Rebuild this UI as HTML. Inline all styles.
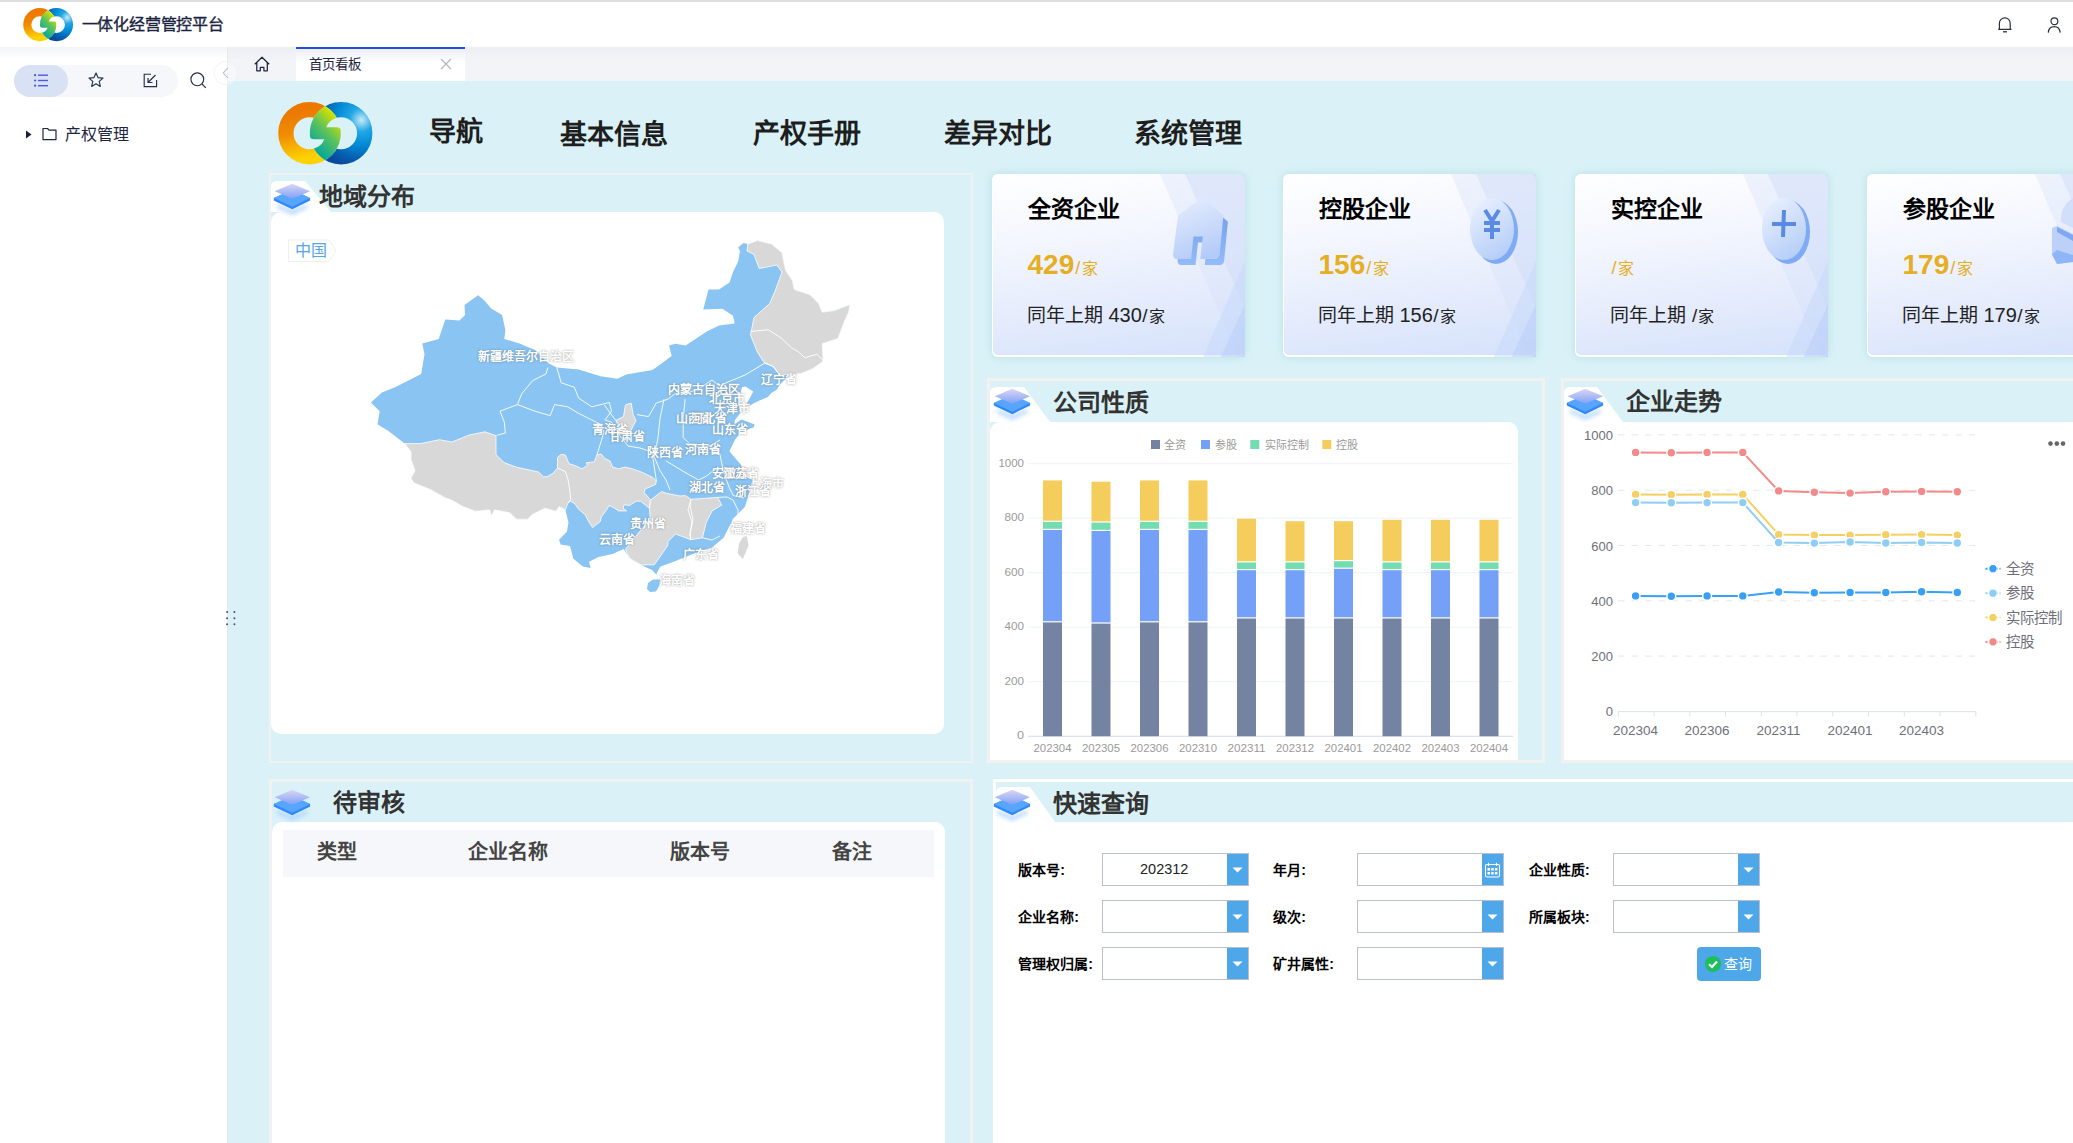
<!DOCTYPE html><html lang="zh-CN"><head><meta charset="utf-8"><title>一体化经营管控平台</title>
<style>
html,body{margin:0;padding:0;}
body{width:2073px;height:1143px;overflow:hidden;position:relative;background:#fff;font-family:"Liberation Sans",sans-serif;}
.t{position:absolute;white-space:nowrap;}
.b{position:absolute;box-sizing:border-box;}
svg{position:absolute;overflow:visible;}
</style></head><body>

<div class="b" style="left:0px;top:0px;width:2073px;height:2px;background:#dcdedf"></div>
<div class="b" style="left:0px;top:2px;width:2073px;height:45px;background:#fff"></div>
<div class="b" style="left:0px;top:47px;width:227px;height:1096px;background:#fff"></div>
<div class="b" style="left:0px;top:47px;width:227px;height:12px;background:linear-gradient(#f3f4f7,#fff)"></div>
<div class="b" style="left:227px;top:47px;width:1px;height:1096px;background:#e6e8ec"></div>
<div class="b" style="left:228px;top:47px;width:1845px;height:34px;background:linear-gradient(#eceef3,#f3f4f8 40%,#f3f4f8)"></div>
<div class="b" style="left:228px;top:81px;width:1845px;height:1062px;background:#daf2f7"></div>
<svg style="left:20.8px;top:5.9px" width="55.0" height="38.1" viewBox="0 0 104 72">
<defs>
<linearGradient id="oa" x1="0.3" y1="0" x2="0.5" y2="1"><stop offset="0" stop-color="#ec7800"/><stop offset="0.45" stop-color="#f08c00"/><stop offset="1" stop-color="#fdd200"/></linearGradient>
<radialGradient id="bla" cx="0.93" cy="0.22" r="1.0"><stop offset="0" stop-color="#c8eaf8"/><stop offset="0.25" stop-color="#22a6e4"/><stop offset="0.55" stop-color="#0088d4"/><stop offset="0.8" stop-color="#0562b4"/><stop offset="1" stop-color="#0a4a9e"/></radialGradient>
<linearGradient id="ga" x1="0.75" y1="0.15" x2="0.3" y2="0.9"><stop offset="0" stop-color="#d2e000"/><stop offset="0.45" stop-color="#5cc25c"/><stop offset="1" stop-color="#00a89e"/></linearGradient>
</defs>
<mask id="mLa" maskUnits="userSpaceOnUse" x="0" y="0" width="104" height="72"><rect width="104" height="72" fill="#fff"/><circle cx="67.1" cy="35.2" r="31.3" fill="#000"/></mask>
<mask id="mRa" maskUnits="userSpaceOnUse" x="0" y="0" width="104" height="72"><rect width="104" height="72" fill="#fff"/><circle cx="35.5" cy="35.2" r="31.3" fill="#000"/></mask>
<circle cx="35.5" cy="35.2" r="23.65" fill="none" stroke="url(#oa)" stroke-width="15.3" mask="url(#mLa)"/>
<circle cx="67.1" cy="35.2" r="23.65" fill="none" stroke="url(#bla)" stroke-width="15.3" mask="url(#mRa)"/>
<path d="M51.3 8.18 A31.3 31.3 0 0 0 35.93 38 Q36.2 41.2 40 41.2 L50.33 41.2 A16 16 0 0 1 39.85 50.6 A31.3 31.3 0 0 0 51.3 62.22 A31.3 31.3 0 0 0 66.67 32.4 Q66.4 29.2 62.6 29.2 L52.27 29.2 A16 16 0 0 1 62.75 19.8 A31.3 31.3 0 0 0 51.3 8.18 Z" fill="url(#ga)"/>
</svg>
<div class="t " style="left:81.5px;top:16.7px;font-size:16px;line-height:16px;color:#1b2542;-webkit-text-stroke:0.35px #1b2542;letter-spacing:-0.2px">一体化经营管控平台</div>
<svg style="left:1993px;top:14px" width="24" height="22" viewBox="0 0 24 22">
<path d="M6.4 15.4 V9.2 a5.4 5.4 0 0 1 10.8 0 V15.4 M5.2 15.4 H18.5" fill="none" stroke="#2b2f3a" stroke-width="1.2" stroke-linejoin="round"/>
<path d="M10 17.8 H14" stroke="#2b2f3a" stroke-width="1.3"/>
</svg>
<svg style="left:2043px;top:14px" width="22" height="22" viewBox="0 0 22 22">
<circle cx="11.4" cy="7.2" r="3.4" fill="none" stroke="#2b2f3a" stroke-width="1.2"/>
<path d="M5.3 18.6 C5.6 15 8 12.7 11.2 12.7 C14.4 12.7 16.8 15 17.1 18.6" fill="none" stroke="#2b2f3a" stroke-width="1.2"/>
</svg>
<div class="b" style="left:14px;top:65px;width:164px;height:32px;background:#f5f7fa;border-radius:16px"></div>
<div class="b" style="left:14px;top:65px;width:54px;height:32px;background:#d9e1f5;border-radius:16px"></div>
<svg style="left:33px;top:72px" width="17" height="17" viewBox="0 0 17 17">
<g fill="#4a5be0"><rect x="1" y="2" width="2.2" height="2.2" rx="1"/><rect x="1" y="7.4" width="2.2" height="2.2" rx="1"/><rect x="1" y="12.6" width="2.2" height="2.2" rx="1"/>
<rect x="5" y="2.5" width="10" height="1.4"/><rect x="5" y="7.8" width="10" height="1.4"/><rect x="5" y="13" width="10" height="1.4"/></g></svg>
<svg style="left:87px;top:71px" width="18" height="18" viewBox="0 0 18 18">
<path d="M9 2 L11 6.6 L16 7.1 L12.2 10.4 L13.3 15.4 L9 12.8 L4.7 15.4 L5.8 10.4 L2 7.1 L7 6.6 Z" fill="none" stroke="#27304a" stroke-width="1.15" stroke-linejoin="round"/></svg>
<svg style="left:142px;top:72px" width="17" height="17" viewBox="0 0 17 17">
<path d="M9 2.2 H2.2 V14.6 H14.6 V8" fill="none" stroke="#27304a" stroke-width="1.15"/>
<path d="M13.5 3 L6 10.5 M6 6 V10.5 H10.5" fill="none" stroke="#27304a" stroke-width="1.15"/></svg>
<svg style="left:189px;top:71px" width="19" height="19" viewBox="0 0 19 19">
<circle cx="8.3" cy="8.3" r="6.4" fill="none" stroke="#27304a" stroke-width="1.15"/>
<path d="M13 13 L16.8 16.8" stroke="#27304a" stroke-width="1.15"/></svg>
<svg style="left:25px;top:130px" width="8" height="9" viewBox="0 0 8 9"><path d="M1 0.5 L6.5 4.5 L1 8.5 Z" fill="#16213f"/></svg>
<svg style="left:42px;top:127px" width="16" height="14" viewBox="0 0 16 14">
<path d="M1 1.5 H5.5 L7 3.2 H14 V12.6 H1 Z" fill="none" stroke="#1d2541" stroke-width="1.2" stroke-linejoin="round"/></svg>
<div class="t " style="left:64.9px;top:126.8px;font-size:16px;line-height:16px;color:#1d2541">产权管理</div>
<svg style="left:220px;top:605px" width="20" height="25" viewBox="220 605 20 25"><g fill="#44506e">
<circle cx="227.1" cy="611.9" r="1"/><circle cx="234.4" cy="611.9" r="1"/><circle cx="227.1" cy="618.2" r="1"/><circle cx="234.4" cy="618.2" r="1"/><circle cx="227.1" cy="624.3" r="1"/><circle cx="234.4" cy="624.3" r="1"/></g></svg>
<svg style="left:253px;top:56px" width="18" height="17" viewBox="0 0 18 17">
<path d="M1.8 8.2 L9 1.2 L16.2 8.2 M3.8 6.6 V14.8 H7.3 V11.3 H10.9 V14.8 H14.3 V6.6" fill="none" stroke="#1d2541" stroke-width="1.25" stroke-linejoin="round"/></svg>
<div class="b" style="left:296px;top:47px;width:169px;height:34px;background:linear-gradient(#e9ecf4,#fff 45%)"></div>
<div class="b" style="left:296px;top:47px;width:169px;height:2px;background:#1f50d6"></div>
<div class="t " style="left:309.3px;top:57.7px;font-size:13.5px;line-height:13.5px;color:#1d2541">首页看板</div>
<svg style="left:213px;top:61px" width="26" height="26" viewBox="0 0 26 26">
<circle cx="12.6" cy="12" r="11.5" fill="rgba(255,255,255,0.35)" stroke="#eef0f2" stroke-width="0.8"/>
<path d="M14.8 6.8 L10.3 12 L14.8 17" fill="none" stroke="#b9bdc7" stroke-width="1.1"/></svg>
<svg style="left:440px;top:58px" width="12" height="12" viewBox="0 0 12 12"><path d="M1 1 L11 11 M11 1 L1 11" stroke="#b2b6c0" stroke-width="1.1"/></svg>
<svg style="left:274.0px;top:98.0px" width="104.0" height="72.0" viewBox="0 0 104 72">
<defs>
<linearGradient id="ob" x1="0.3" y1="0" x2="0.5" y2="1"><stop offset="0" stop-color="#ec7800"/><stop offset="0.45" stop-color="#f08c00"/><stop offset="1" stop-color="#fdd200"/></linearGradient>
<radialGradient id="blb" cx="0.93" cy="0.22" r="1.0"><stop offset="0" stop-color="#c8eaf8"/><stop offset="0.25" stop-color="#22a6e4"/><stop offset="0.55" stop-color="#0088d4"/><stop offset="0.8" stop-color="#0562b4"/><stop offset="1" stop-color="#0a4a9e"/></radialGradient>
<linearGradient id="gb" x1="0.75" y1="0.15" x2="0.3" y2="0.9"><stop offset="0" stop-color="#d2e000"/><stop offset="0.45" stop-color="#5cc25c"/><stop offset="1" stop-color="#00a89e"/></linearGradient>
</defs>
<mask id="mLb" maskUnits="userSpaceOnUse" x="0" y="0" width="104" height="72"><rect width="104" height="72" fill="#fff"/><circle cx="67.1" cy="35.2" r="31.3" fill="#000"/></mask>
<mask id="mRb" maskUnits="userSpaceOnUse" x="0" y="0" width="104" height="72"><rect width="104" height="72" fill="#fff"/><circle cx="35.5" cy="35.2" r="31.3" fill="#000"/></mask>
<circle cx="35.5" cy="35.2" r="23.65" fill="none" stroke="url(#ob)" stroke-width="15.3" mask="url(#mLb)"/>
<circle cx="67.1" cy="35.2" r="23.65" fill="none" stroke="url(#blb)" stroke-width="15.3" mask="url(#mRb)"/>
<path d="M51.3 8.18 A31.3 31.3 0 0 0 35.93 38 Q36.2 41.2 40 41.2 L50.33 41.2 A16 16 0 0 1 39.85 50.6 A31.3 31.3 0 0 0 51.3 62.22 A31.3 31.3 0 0 0 66.67 32.4 Q66.4 29.2 62.6 29.2 L52.27 29.2 A16 16 0 0 1 62.75 19.8 A31.3 31.3 0 0 0 51.3 8.18 Z" fill="url(#gb)"/>
</svg>
<div class="t " style="left:428.6px;top:118.9px;font-size:27px;line-height:27px;color:#1e1e1e;font-weight:bold">导航</div>
<div class="t " style="left:560.0px;top:121.5px;font-size:27px;line-height:27px;color:#1e1e1e;font-weight:bold">基本信息</div>
<div class="t " style="left:752.9px;top:121.2px;font-size:27px;line-height:27px;color:#1e1e1e;font-weight:bold">产权手册</div>
<div class="t " style="left:943.6px;top:121.2px;font-size:27px;line-height:27px;color:#1e1e1e;font-weight:bold">差异对比</div>
<div class="t " style="left:1134.2px;top:121.2px;font-size:27px;line-height:27px;color:#1e1e1e;font-weight:bold">系统管理</div>
<div class="b" style="left:269px;top:173px;width:704px;height:590px;border:2px solid #f1f1f0;background:#daf2f7"></div>
<svg style="left:271px;top:181px" width="60" height="31" viewBox="0 0 60 31"><path d="M0 31 V6 Q0 0 6 0 H34 L60 31 Z" style="fill:#fff"/></svg>
<div class="b" style="left:271px;top:212px;width:673px;height:522px;background:#fff;border-radius:10px"></div>
<svg style="left:273px;top:183px" width="40" height="36" viewBox="0 0 40 36">
<defs>
<linearGradient id="ltm" x1="0.5" y1="0" x2="0.5" y2="1"><stop offset="0" stop-color="#ddd6f5"/><stop offset="1" stop-color="#7ea2f5"/></linearGradient>
<filter id="bfm" x="-30%" y="-50%" width="160%" height="200%"><feGaussianBlur stdDeviation="2"/></filter>
</defs>
<path d="M4 21 L19.3 27 L34.6 21 L34.6 25 L19.3 32 L4 25 Z" fill="#a8d0ff" opacity="0.8" filter="url(#bfm)"/>
<path d="M0.8 15 L19.3 8 L37.1 15 L37.1 17.4 L19.3 26.2 L0.8 17.4 Z" fill="#2f88ff"/>
<path d="M0.8 15 L19.3 6.2 L37.1 15 L19.3 23.8 Z" fill="#57a5ff"/>
<path d="M1.7 8.2 L19.3 0.7 L37.1 8.2 L19.3 15.7 Z" fill="url(#ltm)"/>
</svg>
<div class="t " style="left:318.8px;top:184.8px;font-size:24px;line-height:24px;color:#333;font-weight:bold">地域分布</div>
<svg style="left:287px;top:239px" width="52" height="24" viewBox="0 0 52 24"><path d="M1.5 1 H42 L49 11.5 L42 22.5 H1.5 Z" fill="#fff" stroke="#eef0f2" stroke-width="1"/></svg>
<div class="t " style="left:295.2px;top:242.8px;font-size:16px;line-height:16px;color:#55a6e6">中国</div>
<div class="b" style="left:987px;top:378px;width:558px;height:385px;border:3px solid #f1f1f0;background:#daf2f7"></div>
<svg style="left:990px;top:387px" width="60" height="35" viewBox="0 0 60 35"><path d="M0 35 V6 Q0 0 6 0 H34 L60 35 Z" style="fill:#fff"/></svg>
<div class="b" style="left:990px;top:422px;width:528px;height:338px;background:#fff;border-radius:10px 10px 0 0"></div>
<svg style="left:993px;top:388px" width="40" height="36" viewBox="0 0 40 36">
<defs>
<linearGradient id="ltc" x1="0.5" y1="0" x2="0.5" y2="1"><stop offset="0" stop-color="#ddd6f5"/><stop offset="1" stop-color="#7ea2f5"/></linearGradient>
<filter id="bfc" x="-30%" y="-50%" width="160%" height="200%"><feGaussianBlur stdDeviation="2"/></filter>
</defs>
<path d="M4 21 L19.3 27 L34.6 21 L34.6 25 L19.3 32 L4 25 Z" fill="#a8d0ff" opacity="0.8" filter="url(#bfc)"/>
<path d="M0.8 15 L19.3 8 L37.1 15 L37.1 17.4 L19.3 26.2 L0.8 17.4 Z" fill="#2f88ff"/>
<path d="M0.8 15 L19.3 6.2 L37.1 15 L19.3 23.8 Z" fill="#57a5ff"/>
<path d="M1.7 8.2 L19.3 0.7 L37.1 8.2 L19.3 15.7 Z" fill="url(#ltc)"/>
</svg>
<div class="t " style="left:1053.2px;top:390.6px;font-size:24px;line-height:24px;color:#333;font-weight:bold">公司性质</div>
<div class="b" style="left:1561px;top:378px;width:540px;height:385px;border:3px solid #f1f1f0;background:#daf2f7"></div>
<svg style="left:1564px;top:387px" width="59" height="35" viewBox="0 0 59 35"><path d="M0 35 V6 Q0 0 6 0 H33 L59 35 Z" style="fill:#fff"/></svg>
<div class="b" style="left:1564px;top:422px;width:509px;height:338px;background:#fff"></div>
<svg style="left:1566px;top:388px" width="40" height="36" viewBox="0 0 40 36">
<defs>
<linearGradient id="ltl" x1="0.5" y1="0" x2="0.5" y2="1"><stop offset="0" stop-color="#ddd6f5"/><stop offset="1" stop-color="#7ea2f5"/></linearGradient>
<filter id="bfl" x="-30%" y="-50%" width="160%" height="200%"><feGaussianBlur stdDeviation="2"/></filter>
</defs>
<path d="M4 21 L19.3 27 L34.6 21 L34.6 25 L19.3 32 L4 25 Z" fill="#a8d0ff" opacity="0.8" filter="url(#bfl)"/>
<path d="M0.8 15 L19.3 8 L37.1 15 L37.1 17.4 L19.3 26.2 L0.8 17.4 Z" fill="#2f88ff"/>
<path d="M0.8 15 L19.3 6.2 L37.1 15 L19.3 23.8 Z" fill="#57a5ff"/>
<path d="M1.7 8.2 L19.3 0.7 L37.1 8.2 L19.3 15.7 Z" fill="url(#ltl)"/>
</svg>
<div class="t " style="left:1625.8px;top:390.1px;font-size:24px;line-height:24px;color:#333;font-weight:bold">企业走势</div>
<div class="b" style="left:269px;top:779px;width:704px;height:400px;border:3px solid #f1f1f0;background:#daf2f7"></div>
<div class="b" style="left:272px;top:822px;width:673px;height:400px;background:#fff;border-radius:10px"></div>
<svg style="left:273px;top:789px" width="40" height="36" viewBox="0 0 40 36">
<defs>
<linearGradient id="ltp" x1="0.5" y1="0" x2="0.5" y2="1"><stop offset="0" stop-color="#ddd6f5"/><stop offset="1" stop-color="#7ea2f5"/></linearGradient>
<filter id="bfp" x="-30%" y="-50%" width="160%" height="200%"><feGaussianBlur stdDeviation="2"/></filter>
</defs>
<path d="M4 21 L19.3 27 L34.6 21 L34.6 25 L19.3 32 L4 25 Z" fill="#a8d0ff" opacity="0.8" filter="url(#bfp)"/>
<path d="M0.8 15 L19.3 8 L37.1 15 L37.1 17.4 L19.3 26.2 L0.8 17.4 Z" fill="#2f88ff"/>
<path d="M0.8 15 L19.3 6.2 L37.1 15 L19.3 23.8 Z" fill="#57a5ff"/>
<path d="M1.7 8.2 L19.3 0.7 L37.1 8.2 L19.3 15.7 Z" fill="url(#ltp)"/>
</svg>
<div class="t " style="left:333.2px;top:790.7px;font-size:24px;line-height:24px;color:#333;font-weight:bold">待审核</div>
<div class="b" style="left:283px;top:830px;width:651px;height:47px;background:#f5f7fa"></div>
<div class="t " style="left:316.5px;top:841.8px;font-size:20px;line-height:20px;color:#444;font-weight:bold">类型</div>
<div class="t " style="left:468.4px;top:841.8px;font-size:20px;line-height:20px;color:#444;font-weight:bold">企业名称</div>
<div class="t " style="left:670.0px;top:841.8px;font-size:20px;line-height:20px;color:#444;font-weight:bold">版本号</div>
<div class="t " style="left:832.0px;top:841.8px;font-size:20px;line-height:20px;color:#444;font-weight:bold">备注</div>
<div class="b" style="left:993px;top:779px;width:1100px;height:400px;border:3px solid #fff;background:#fff"></div>
<div class="b" style="left:996px;top:782px;width:1077px;height:40px;background:#daf2f7"></div>
<svg style="left:996px;top:787px" width="59" height="35" viewBox="0 0 59 35"><path d="M0 35 V6 Q0 0 6 0 H34 L59 35 Z" style="fill:#fff"/></svg>
<svg style="left:993px;top:789px" width="40" height="36" viewBox="0 0 40 36">
<defs>
<linearGradient id="ltq" x1="0.5" y1="0" x2="0.5" y2="1"><stop offset="0" stop-color="#ddd6f5"/><stop offset="1" stop-color="#7ea2f5"/></linearGradient>
<filter id="bfq" x="-30%" y="-50%" width="160%" height="200%"><feGaussianBlur stdDeviation="2"/></filter>
</defs>
<path d="M4 21 L19.3 27 L34.6 21 L34.6 25 L19.3 32 L4 25 Z" fill="#a8d0ff" opacity="0.8" filter="url(#bfq)"/>
<path d="M0.8 15 L19.3 8 L37.1 15 L37.1 17.4 L19.3 26.2 L0.8 17.4 Z" fill="#2f88ff"/>
<path d="M0.8 15 L19.3 6.2 L37.1 15 L19.3 23.8 Z" fill="#57a5ff"/>
<path d="M1.7 8.2 L19.3 0.7 L37.1 8.2 L19.3 15.7 Z" fill="url(#ltq)"/>
</svg>
<div class="t " style="left:1052.8px;top:791.5px;font-size:24px;line-height:24px;color:#333;font-weight:bold">快速查询</div>
<div class="b" style="left:992px;top:174px;width:253px;height:183px;border-radius:6px;background:linear-gradient(172deg,#ffffff 0%,#f3f6fe 35%,#e4ebfc 70%,#d5e2fb 100%);box-shadow:0 0 8px rgba(120,190,200,0.35);border-left:1.5px solid #fff;border-bottom:2.5px solid #fff"></div>
<svg style="left:992px;top:174px" width="253" height="183" viewBox="0 0 253 183">
<path d="M168 0 H253 V183 H246 Z" fill="#d4e0fa" opacity="0.35"/>
<path d="M193 0 H253 V134 Z" fill="#cfdcf9" opacity="0.45"/>
<path d="M253 87 L211 183 H253 Z" fill="#c4d6fa" opacity="0.45"/>
<path d="M253 130.6 L228.6 183 H253 Z" fill="#b5cdf8" opacity="0.45"/>
</svg>
<div class="t " style="left:1027.5px;top:198.2px;font-size:23px;line-height:23px;color:#000;font-weight:bold">全资企业</div>
<div class="t" style="left:1027.5px;top:250.8px;font-size:28px;line-height:28px;color:#e6ae22;font-weight:bold">429<span style="font-size:18px;font-weight:normal;margin-left:1px">/</span><span style="font-size:16px;font-weight:normal;margin-left:1.5px">家</span></div>
<div class="t" style="left:1027.2px;top:305.8px;font-size:19px;line-height:19px;color:#222">同年上期 <span style="font-size:20px">430</span><span style="font-size:19px;margin-left:0.5px">/</span><span style="font-size:16px;margin-left:1px">家</span></div>
<div class="b" style="left:1283px;top:174px;width:253px;height:183px;border-radius:6px;background:linear-gradient(172deg,#ffffff 0%,#f3f6fe 35%,#e4ebfc 70%,#d5e2fb 100%);box-shadow:0 0 8px rgba(120,190,200,0.35);border-left:1.5px solid #fff;border-bottom:2.5px solid #fff"></div>
<svg style="left:1283px;top:174px" width="253" height="183" viewBox="0 0 253 183">
<path d="M168 0 H253 V183 H246 Z" fill="#d4e0fa" opacity="0.35"/>
<path d="M193 0 H253 V134 Z" fill="#cfdcf9" opacity="0.45"/>
<path d="M253 87 L211 183 H253 Z" fill="#c4d6fa" opacity="0.45"/>
<path d="M253 130.6 L228.6 183 H253 Z" fill="#b5cdf8" opacity="0.45"/>
</svg>
<div class="t " style="left:1318.5px;top:198.2px;font-size:23px;line-height:23px;color:#000;font-weight:bold">控股企业</div>
<div class="t" style="left:1318.5px;top:250.8px;font-size:28px;line-height:28px;color:#e6ae22;font-weight:bold">156<span style="font-size:18px;font-weight:normal;margin-left:1px">/</span><span style="font-size:16px;font-weight:normal;margin-left:1.5px">家</span></div>
<div class="t" style="left:1318.2px;top:305.8px;font-size:19px;line-height:19px;color:#222">同年上期 <span style="font-size:20px">156</span><span style="font-size:19px;margin-left:0.5px">/</span><span style="font-size:16px;margin-left:1px">家</span></div>
<div class="b" style="left:1575px;top:174px;width:253px;height:183px;border-radius:6px;background:linear-gradient(172deg,#ffffff 0%,#f3f6fe 35%,#e4ebfc 70%,#d5e2fb 100%);box-shadow:0 0 8px rgba(120,190,200,0.35);border-left:1.5px solid #fff;border-bottom:2.5px solid #fff"></div>
<svg style="left:1575px;top:174px" width="253" height="183" viewBox="0 0 253 183">
<path d="M168 0 H253 V183 H246 Z" fill="#d4e0fa" opacity="0.35"/>
<path d="M193 0 H253 V134 Z" fill="#cfdcf9" opacity="0.45"/>
<path d="M253 87 L211 183 H253 Z" fill="#c4d6fa" opacity="0.45"/>
<path d="M253 130.6 L228.6 183 H253 Z" fill="#b5cdf8" opacity="0.45"/>
</svg>
<div class="t " style="left:1610.5px;top:198.2px;font-size:23px;line-height:23px;color:#000;font-weight:bold">实控企业</div>
<div class="t" style="left:1610.5px;top:250.8px;font-size:28px;line-height:28px;color:#e6ae22;font-weight:bold"><span style="font-size:18px;font-weight:normal;margin-left:1px">/</span><span style="font-size:16px;font-weight:normal;margin-left:1.5px">家</span></div>
<div class="t" style="left:1610.2px;top:305.8px;font-size:19px;line-height:19px;color:#222">同年上期 <span style="font-size:20px"></span><span style="font-size:19px;margin-left:0.5px">/</span><span style="font-size:16px;margin-left:1px">家</span></div>
<div class="b" style="left:1867px;top:174px;width:253px;height:183px;border-radius:6px;background:linear-gradient(172deg,#ffffff 0%,#f3f6fe 35%,#e4ebfc 70%,#d5e2fb 100%);box-shadow:0 0 8px rgba(120,190,200,0.35);border-left:1.5px solid #fff;border-bottom:2.5px solid #fff"></div>
<svg style="left:1867px;top:174px" width="253" height="183" viewBox="0 0 253 183">
<path d="M168 0 H253 V183 H246 Z" fill="#d4e0fa" opacity="0.35"/>
<path d="M193 0 H253 V134 Z" fill="#cfdcf9" opacity="0.45"/>
<path d="M253 87 L211 183 H253 Z" fill="#c4d6fa" opacity="0.45"/>
<path d="M253 130.6 L228.6 183 H253 Z" fill="#b5cdf8" opacity="0.45"/>
</svg>
<div class="t " style="left:1902.5px;top:198.2px;font-size:23px;line-height:23px;color:#000;font-weight:bold">参股企业</div>
<div class="t" style="left:1902.5px;top:250.8px;font-size:28px;line-height:28px;color:#e6ae22;font-weight:bold">179<span style="font-size:18px;font-weight:normal;margin-left:1px">/</span><span style="font-size:16px;font-weight:normal;margin-left:1.5px">家</span></div>
<div class="t" style="left:1902.2px;top:305.8px;font-size:19px;line-height:19px;color:#222">同年上期 <span style="font-size:20px">179</span><span style="font-size:19px;margin-left:0.5px">/</span><span style="font-size:16px;margin-left:1px">家</span></div>
<svg style="left:1160px;top:185px" width="80" height="90" viewBox="0 0 80 90">
<defs><linearGradient id="hs" x1="0.3" y1="0" x2="0.6" y2="1"><stop offset="0" stop-color="#e4ecfd"/><stop offset="1" stop-color="#b3cbf8"/></linearGradient>
<linearGradient id="hx" x1="0" y1="0" x2="0" y2="1"><stop offset="0" stop-color="#6f9ae8"/><stop offset="1" stop-color="#94bbf9"/></linearGradient></defs>
<path transform="translate(4.5,6)" d="M42.9 12.2 L18.1 30.3 L13 69.3 Q13 74 16.5 74 L31.1 74 L33.5 51.6 L42.9 51.6 L40.2 74 L55.1 74 Q59.8 74 59.8 67.7 L63.4 30.7 Z" fill="url(#hx)"/>
<path d="M42.9 12.2 L18.1 30.3 L13 69.3 Q13 74 16.5 74 L31.1 74 L33.5 51.6 L42.9 51.6 L40.2 74 L55.1 74 Q59.8 74 59.8 67.7 L63.4 30.7 Z" fill="url(#hs)"/>
</svg>
<svg style="left:1466px;top:196px" width="56" height="72" viewBox="0 0 56 72">
<defs><linearGradient id="cf1" x1="0.2" y1="0" x2="0.7" y2="1"><stop offset="0" stop-color="#e9f0ff"/><stop offset="1" stop-color="#b4cdf7"/></linearGradient></defs>
<ellipse cx="30" cy="36" rx="22" ry="32" fill="#7fabf5"/>
<ellipse cx="26" cy="33" rx="22" ry="31" fill="url(#cf1)"/>
<path d="M19 14 L26 25 L33 14 M26 25 V43 M18 27 H34 M18 34 H34" fill="none" stroke="#5b8ae4" stroke-width="4" stroke-linecap="butt"/></svg>
<svg style="left:1758px;top:196px" width="56" height="72" viewBox="0 0 56 72">
<defs><linearGradient id="cf2" x1="0.2" y1="0" x2="0.7" y2="1"><stop offset="0" stop-color="#e9f0ff"/><stop offset="1" stop-color="#b4cdf7"/></linearGradient></defs>
<ellipse cx="30" cy="36" rx="22" ry="32" fill="#7fabf5"/>
<ellipse cx="26" cy="33" rx="22" ry="31" fill="url(#cf2)"/>
<path d="M26 14 L25 41 M14 28 H38" fill="none" stroke="#5b8ae4" stroke-width="4"/></svg>
<svg style="left:2040px;top:185px" width="40" height="90" viewBox="2040 185 40 90">
<path d="M2061 222 Q2060 206 2073 198 V228 Z" fill="#d2dffb"/><path d="M2052 228 L2057 226 L2073 234 V262 L2057 264 L2052 255 Z" fill="#bdd1f8"/>
<path d="M2057 227 L2073 235 V241 L2057 232 Z" fill="#7ea8f4"/>
<path d="M2052 254 L2057 264 L2073 262 V255 L2057 250 Z" fill="#8fb5f7"/>
</svg>
<svg style="left:0;top:0" width="2073" height="1143" viewBox="0 0 2073 1143">
<path d="M478.1 295.3 L484.0 300.0 L491.2 308.4 L502.1 315.0 L505.4 330.3 L504.3 339.0 L519.6 343.4 L535.0 350.0 L548.0 363.0 L556.8 367.5 L578.7 369.6 L600.5 376.2 L617.5 378.7 L626.2 374.4 L652.5 370.0 L671.7 356.0 L669.1 345.5 L675.2 343.7 L685.7 345.5 L696.2 338.5 L706.7 331.5 L719.0 325.4 L734.7 323.6 L733.0 315.7 L722.5 308.7 L703.2 309.6 L708.5 289.5 L719.0 289.5 L729.5 282.5 L733.0 272.0 L738.2 261.5 L740.0 251.0 L738.2 247.5 L743.5 243.1 L747.9 244.0 L757.5 240.5 L771.5 244.0 L782.0 252.7 L785.5 270.2 L792.5 280.7 L794.2 289.5 L810.0 294.7 L818.7 303.5 L822.2 312.2 L834.5 310.5 L850.2 304.4 L848.5 312.2 L843.2 324.5 L838.0 338.5 L822.2 343.7 L823.1 361.2 L813.5 368.2 L801.2 373.5 L789.0 375.2 L779.1 385.2 L777.0 389.4 L771.4 392.9 L767.9 397.1 L759.5 400.6 L753.2 403.4 L749.0 406.2 L747.0 403.0 L750.4 397.1 L753.2 391.5 L745.5 386.6 L742.0 387.3 L740.0 395.0 L738.0 404.0 L741.0 412.0 L735.0 420.0 L734.3 424.4 L741.3 419.5 L749.0 422.3 L754.6 424.4 L753.9 427.2 L748.3 429.3 L739.2 434.2 L735.0 439.8 L729.4 451.2 L740.9 464.7 L744.8 476.2 L752.4 480.0 L748.6 495.5 L744.8 507.0 L733.2 518.6 L723.6 537.8 L712.0 547.4 L694.7 553.2 L675.5 560.9 L660.1 566.7 L656.2 574.4 L652.0 570.0 L641.0 564.9 L629.9 558.6 L623.6 549.1 L612.6 553.9 L598.4 557.0 L589.0 561.7 L590.6 568.0 L582.7 566.5 L573.2 558.6 L570.1 546.0 L560.6 544.4 L559.1 539.7 L566.9 531.8 L568.5 522.4 L565.4 509.8 L559.1 506.6 L555.9 511.3 L544.9 508.2 L532.3 514.5 L527.6 519.2 L516.5 519.2 L510.2 512.9 L494.5 509.8 L491.3 516.0 L489.8 509.8 L475.6 511.3 L463.0 506.6 L452.0 500.3 L444.1 497.2 L429.9 489.3 L414.2 483.0 L411.0 478.3 L415.0 470.4 L411.0 459.4 L411.0 451.5 L404.7 443.6 L388.4 430.9 L377.5 424.3 L379.7 411.2 L370.9 402.5 L381.9 392.6 L395.0 387.2 L421.2 374.0 L424.5 354.3 L422.3 343.4 L438.7 339.0 L445.3 319.4 L459.5 320.5 L465.0 315.0 L464.5 305.1 Z" fill="#8ac4f2"/>
<path d="M648.0 583.0 L653.0 579.5 L660.0 579.5 L659.0 586.0 L656.0 591.5 L650.0 592.0 L647.0 589.0 Z" fill="#8ac4f2"/>
<path d="M747.9 244.0 L757.5 240.5 L771.5 244.0 L782.0 252.7 L785.5 270.2 L792.5 280.7 L794.2 289.5 L810.0 294.7 L818.7 303.5 L822.2 312.2 L834.5 310.5 L850.2 304.4 L848.5 312.2 L843.2 324.5 L838.0 338.5 L822.2 343.7 L823.1 361.2 L813.5 368.2 L801.2 373.5 L789.0 375.2 L778.5 373.5 L773.2 366.5 L764.5 363.0 L757.5 352.5 L750.5 335.0 L754.0 317.5 L769.7 303.5 L775.0 291.2 L782.0 272.0 L776.7 265.0 L759.2 268.5 L754.0 254.5 L747.0 251.0 Z" fill="#d8d8d8" stroke="#fff" stroke-width="0.8"/>
<path d="M404.7 443.6 L420.5 443.6 L439.4 439.7 L452.0 442.0 L469.3 435.0 L485.0 431.8 L496.0 435.7 L496.0 454.6 L504.0 462.5 L516.5 467.2 L538.6 472.0 L543.3 476.7 L547.0 476.7 L553.1 473.2 L557.5 468.0 L557.5 457.5 L561.0 454.4 L565.4 454.9 L568.9 463.6 L576.7 466.2 L582.0 468.9 L587.2 465.4 L586.4 462.7 L594.2 461.9 L596.9 454.9 L601.2 454.0 L604.7 458.4 L610.0 461.0 L612.6 467.1 L618.7 468.9 L624.9 467.1 L632.7 468.9 L642.4 472.4 L652.9 477.6 L656.4 481.1 L655.5 484.6 L645.0 489.0 L644.1 492.5 L650.2 499.5 L649.4 508.2 L640.6 501.2 L636.2 501.2 L629.2 505.6 L624.0 504.7 L623.1 508.2 L626.6 510.9 L618.7 510.9 L611.7 506.5 L609.1 505.6 L606.5 510.0 L601.2 517.0 L600.4 521.4 L592.5 527.5 L589.0 522.2 L585.5 515.2 L578.5 509.1 L575.0 503.9 L570.6 501.2 L568.0 503.0 L565.4 509.8 L559.1 506.6 L555.9 511.3 L544.9 508.2 L532.3 514.5 L527.6 519.2 L516.5 519.2 L510.2 512.9 L494.5 509.8 L491.3 516.0 L489.8 509.8 L475.6 511.3 L463.0 506.6 L452.0 500.3 L444.1 497.2 L429.9 489.3 L414.2 483.0 L411.0 478.3 L415.0 470.4 L411.0 459.4 L411.0 451.5 Z" fill="#d8d8d8" stroke="#fff" stroke-width="0.8"/>
<path d="M557.5 468 L565.4 471.5 L568 479.4 L569.7 489 L570.6 499.5 L568 503" fill="none" stroke="#fff" stroke-width="0.9"/>
<path d="M651.1 499.5 L661.6 491.6 L666.9 493.4 L680.0 496.0 L685.1 495.5 L690.9 499.3 L717.8 497.4 L721.7 505.1 L712.0 510.9 L706.3 522.4 L702.4 537.8 L690.9 539.7 L675.5 534.0 L667.8 541.7 L667.8 545.5 L654.3 564.8 L641.0 564.9 L629.9 558.6 L625.4 549.4 L640.8 530.1 L650.5 522.4 L649.4 508.2 Z" fill="#d8d8d8" stroke="#fff" stroke-width="0.8"/>
<path d="M690.9 499.3 L688 510 L692 522 L690 534 L690.9 539.7" fill="none" stroke="#fff" stroke-width="0.9"/>
<path d="M625.4 405.0 L631.2 403.1 L633.1 414.6 L636.0 420.4 L631.2 430.0 L623.5 435.8 L617.7 424.3 L615.8 420.4 L623.5 416.6 Z" fill="#d8d8d8" stroke="#fff" stroke-width="0.8"/>
<path d="M746.7 535.9 L748.6 545.5 L745.0 554.0 L742.8 559.0 L737.6 553.2 L739.0 543.6 L743.0 537.0 Z" fill="#d8d8d8"/>
<path d="M765 363 L773.2 366.5 L778.5 373.5" fill="none" stroke="#fff" stroke-width="0.9"/>
<path d="M750.5 331.5 L768 329.7 L782 338.5 L790.7 347.2 L799.5 352.5 L804.7 357.7 L817 354.2 L822.2 359.5" fill="none" stroke="#fff" stroke-width="0.9"/>

<path d="M548 367.5 L545.9 374 L532.7 380.6 L521.8 393.7 L517.4 404.6 L500 411.2 L504.3 422.1 L505.4 433 L496.7 435.3" fill="none" stroke="#fff" stroke-width="0.9"/>
<path d="M517.4 404.6 L535 411.2 L550.2 415.6 L554.6 404.6 L567.7 406.8 L578.7 413.4 L591.8 420 L600.5 424.3 L604 432 L600 445 L596.9 454.9" fill="none" stroke="#fff" stroke-width="0.9"/>
<path d="M556.8 367.5 L561.2 382.8 L574.3 387.2 L578.7 398.1 L591.8 406.8 L609.3 402.5 L611.5 411.2 L604.9 420 L612 422.3" fill="none" stroke="#fff" stroke-width="0.9"/>
<path d="M612 422.3 L620 436 L628 446 L640 448 L652 452 L656.4 481.1" fill="none" stroke="#fff" stroke-width="0.9"/>
<path d="M604.3 405 L615.8 420.4" fill="none" stroke="#fff" stroke-width="0.9"/>
<path d="M637 414.6 L648.5 416.6 L656.2 403.1 L667.8 399.2 L675.5 393.5 L690 392 L700 388 L712 380 L719 386 L728 382 L745 375 L765 363" fill="none" stroke="#fff" stroke-width="0.9"/>
<path d="M664 399.2 L660 418.5 L658 437.7 L654.3 457 L660 470.5 L666 480 L670 490" fill="none" stroke="#fff" stroke-width="0.9"/>
<path d="M685.1 399.2 L683.2 418.5 L683.2 437.7 L690 444 L700 448 L712 445 L720 440" fill="none" stroke="#fff" stroke-width="0.9"/>
<path d="M665.8 460.8 L685 472.4 L698.6 480 L706.3 476.2 L714 470 L722 468 L730 470" fill="none" stroke="#fff" stroke-width="0.9"/>
<path d="M719.7 453.1 L723.6 472.4 L729.4 487.8 L733.2 495.5 L744 498" fill="none" stroke="#fff" stroke-width="0.9"/>
<path d="M717.8 497.4 L727 497 L733 500 L738 510 L738 518" fill="none" stroke="#fff" stroke-width="0.9"/>
<path d="M702.4 537.8 L712 540 L720 536" fill="none" stroke="#fff" stroke-width="0.9"/>
<path d="M690.9 539.7 L690 534 L693 520 L690 505 L690.9 499.3" fill="none" stroke="#fff" stroke-width="0.9"/>
</svg>
<div class="t " style="left:478.4px;top:351.3px;font-size:12px;line-height:12px;color:#fff;font-weight:bold;text-shadow:0 0 2px rgba(60,60,60,0.55)">新疆维吾尔自治区</div>
<div class="t " style="left:668.4px;top:383.6px;font-size:12px;line-height:12px;color:#fff;font-weight:bold;text-shadow:0 0 2px rgba(60,60,60,0.55)">内蒙古自治区</div>
<div class="t " style="left:760.7px;top:373.9px;font-size:12px;line-height:12px;color:#fff;font-weight:bold;text-shadow:0 0 2px rgba(60,60,60,0.55)">辽宁省</div>
<div class="t " style="left:708.9px;top:393.3px;font-size:12px;line-height:12px;color:#fff;font-weight:bold;text-shadow:0 0 2px rgba(60,60,60,0.55)">北京市</div>
<div class="t " style="left:713.8px;top:402.9px;font-size:12px;line-height:12px;color:#fff;font-weight:bold;text-shadow:0 0 2px rgba(60,60,60,0.55)">天津市</div>
<div class="t " style="left:676.4px;top:412.7px;font-size:12px;line-height:12px;color:#fff;font-weight:bold;text-shadow:0 0 2px rgba(60,60,60,0.55)">山西省</div>
<div class="t " style="left:691.1px;top:412.7px;font-size:12px;line-height:12px;color:#fff;font-weight:bold;text-shadow:0 0 2px rgba(60,60,60,0.55)">河北省</div>
<div class="t " style="left:712.1px;top:424.1px;font-size:12px;line-height:12px;color:#fff;font-weight:bold;text-shadow:0 0 2px rgba(60,60,60,0.55)">山东省</div>
<div class="t " style="left:591.8px;top:424.1px;font-size:12px;line-height:12px;color:#fff;font-weight:bold;text-shadow:0 0 2px rgba(60,60,60,0.55)">青海省</div>
<div class="t " style="left:608.6px;top:430.5px;font-size:12px;line-height:12px;color:#fff;font-weight:bold;text-shadow:0 0 2px rgba(60,60,60,0.55)">甘肃省</div>
<div class="t " style="left:647.4px;top:446.7px;font-size:12px;line-height:12px;color:#fff;font-weight:bold;text-shadow:0 0 2px rgba(60,60,60,0.55)">陕西省</div>
<div class="t " style="left:684.6px;top:443.5px;font-size:12px;line-height:12px;color:#fff;font-weight:bold;text-shadow:0 0 2px rgba(60,60,60,0.55)">河南省</div>
<div class="t " style="left:712.1px;top:467.8px;font-size:12px;line-height:12px;color:#fff;font-weight:bold;text-shadow:0 0 2px rgba(60,60,60,0.55)">安徽省</div>
<div class="t " style="left:723.4px;top:467.8px;font-size:12px;line-height:12px;color:#fff;font-weight:bold;text-shadow:0 0 2px rgba(60,60,60,0.55)">江苏省</div>
<div class="t " style="left:747.7px;top:477.5px;font-size:12px;line-height:12px;color:#fff;font-weight:bold;text-shadow:0 0 2px rgba(60,60,60,0.55)">上海市</div>
<div class="t " style="left:689.4px;top:482.3px;font-size:12px;line-height:12px;color:#fff;font-weight:bold;text-shadow:0 0 2px rgba(60,60,60,0.55)">湖北省</div>
<div class="t " style="left:734.8px;top:485.6px;font-size:12px;line-height:12px;color:#fff;font-weight:bold;text-shadow:0 0 2px rgba(60,60,60,0.55)">浙江省</div>
<div class="t " style="left:629.6px;top:517.9px;font-size:12px;line-height:12px;color:#fff;font-weight:bold;text-shadow:0 0 2px rgba(60,60,60,0.55)">贵州省</div>
<div class="t " style="left:598.9px;top:534.1px;font-size:12px;line-height:12px;color:#fff;font-weight:bold;text-shadow:0 0 2px rgba(60,60,60,0.55)">云南省</div>
<div class="t " style="left:730.0px;top:522.8px;font-size:12px;line-height:12px;color:#fff;font-weight:bold;text-shadow:0 0 2px rgba(60,60,60,0.55)">福建省</div>
<div class="t " style="left:683.0px;top:548.7px;font-size:12px;line-height:12px;color:#fff;font-weight:bold;text-shadow:0 0 2px rgba(60,60,60,0.55)">广东省</div>
<div class="t " style="left:658.8px;top:574.6px;font-size:12px;line-height:12px;color:#fff;font-weight:bold;text-shadow:0 0 2px rgba(60,60,60,0.55)">海南省</div>
<svg style="left:0;top:0" width="2073" height="1143" viewBox="0 0 2073 1143">
<rect x="1028" y="463.2" width="485" height="1" fill="#eef2fa"/>
<text x="1024" y="466.9" text-anchor="end" font-size="11" fill="#9a9a9a" font-family="Liberation Sans" textLength="25.5" lengthAdjust="spacingAndGlyphs">1000</text>
<rect x="1028" y="517.7" width="485" height="1" fill="#eef2fa"/>
<text x="1024" y="521.4" text-anchor="end" font-size="11" fill="#9a9a9a" font-family="Liberation Sans" textLength="19.5" lengthAdjust="spacingAndGlyphs">800</text>
<rect x="1028" y="572.2" width="485" height="1" fill="#eef2fa"/>
<text x="1024" y="575.9" text-anchor="end" font-size="11" fill="#9a9a9a" font-family="Liberation Sans" textLength="19.5" lengthAdjust="spacingAndGlyphs">600</text>
<rect x="1028" y="626.7" width="485" height="1" fill="#eef2fa"/>
<text x="1024" y="630.4" text-anchor="end" font-size="11" fill="#9a9a9a" font-family="Liberation Sans" textLength="19.5" lengthAdjust="spacingAndGlyphs">400</text>
<rect x="1028" y="681.2" width="485" height="1" fill="#eef2fa"/>
<text x="1024" y="684.9" text-anchor="end" font-size="11" fill="#9a9a9a" font-family="Liberation Sans" textLength="19.5" lengthAdjust="spacingAndGlyphs">200</text>
<text x="1024" y="739.4" text-anchor="end" font-size="11" fill="#9a9a9a" font-family="Liberation Sans" textLength="7" lengthAdjust="spacingAndGlyphs">0</text>
<rect x="1028" y="735.7" width="485" height="1.2" fill="#d6e0f5"/>
<rect x="1043.0" y="622.4" width="19" height="113.8" fill="#7483a2"/>
<rect x="1043.0" y="530" width="19" height="91.2" fill="#74a0f7"/>
<rect x="1043.0" y="521.9" width="19" height="6.9" fill="#73dcb0"/>
<rect x="1043.0" y="480.4" width="19" height="40.3" fill="#f5cd5c"/>
<rect x="1091.5" y="623.6" width="19" height="112.6" fill="#7483a2"/>
<rect x="1091.5" y="531" width="19" height="91.4" fill="#74a0f7"/>
<rect x="1091.5" y="522.6" width="19" height="7.2" fill="#73dcb0"/>
<rect x="1091.5" y="481.7" width="19" height="39.7" fill="#f5cd5c"/>
<rect x="1140.0" y="622.4" width="19" height="113.8" fill="#7483a2"/>
<rect x="1140.0" y="530" width="19" height="91.2" fill="#74a0f7"/>
<rect x="1140.0" y="521.9" width="19" height="6.9" fill="#73dcb0"/>
<rect x="1140.0" y="480.4" width="19" height="40.3" fill="#f5cd5c"/>
<rect x="1188.5" y="622.4" width="19" height="113.8" fill="#7483a2"/>
<rect x="1188.5" y="530" width="19" height="91.2" fill="#74a0f7"/>
<rect x="1188.5" y="521.9" width="19" height="6.9" fill="#73dcb0"/>
<rect x="1188.5" y="480.4" width="19" height="40.3" fill="#f5cd5c"/>
<rect x="1237.0" y="618.5" width="19" height="117.7" fill="#7483a2"/>
<rect x="1237.0" y="570.2" width="19" height="47.1" fill="#74a0f7"/>
<rect x="1237.0" y="562.5" width="19" height="6.5" fill="#73dcb0"/>
<rect x="1237.0" y="518.7" width="19" height="42.6" fill="#f5cd5c"/>
<rect x="1285.5" y="618.5" width="19" height="117.7" fill="#7483a2"/>
<rect x="1285.5" y="570.2" width="19" height="47.1" fill="#74a0f7"/>
<rect x="1285.5" y="562.5" width="19" height="6.5" fill="#73dcb0"/>
<rect x="1285.5" y="521.2" width="19" height="40.1" fill="#f5cd5c"/>
<rect x="1334.0" y="618.5" width="19" height="117.7" fill="#7483a2"/>
<rect x="1334.0" y="568.8" width="19" height="48.5" fill="#74a0f7"/>
<rect x="1334.0" y="561.2" width="19" height="6.4" fill="#73dcb0"/>
<rect x="1334.0" y="521.2" width="19" height="38.8" fill="#f5cd5c"/>
<rect x="1382.5" y="618.5" width="19" height="117.7" fill="#7483a2"/>
<rect x="1382.5" y="570.2" width="19" height="47.1" fill="#74a0f7"/>
<rect x="1382.5" y="562.5" width="19" height="6.5" fill="#73dcb0"/>
<rect x="1382.5" y="519.8" width="19" height="41.5" fill="#f5cd5c"/>
<rect x="1431.0" y="618.5" width="19" height="117.7" fill="#7483a2"/>
<rect x="1431.0" y="570.2" width="19" height="47.1" fill="#74a0f7"/>
<rect x="1431.0" y="562.5" width="19" height="6.5" fill="#73dcb0"/>
<rect x="1431.0" y="519.8" width="19" height="41.5" fill="#f5cd5c"/>
<rect x="1479.5" y="618.5" width="19" height="117.7" fill="#7483a2"/>
<rect x="1479.5" y="570.2" width="19" height="47.1" fill="#74a0f7"/>
<rect x="1479.5" y="562.5" width="19" height="6.5" fill="#73dcb0"/>
<rect x="1479.5" y="519.8" width="19" height="41.5" fill="#f5cd5c"/>
<text x="1052.5" y="752.2" text-anchor="middle" font-size="11" fill="#9a9a9a" font-family="Liberation Sans" textLength="38" lengthAdjust="spacingAndGlyphs">202304</text>
<text x="1101.0" y="752.2" text-anchor="middle" font-size="11" fill="#9a9a9a" font-family="Liberation Sans" textLength="38" lengthAdjust="spacingAndGlyphs">202305</text>
<text x="1149.5" y="752.2" text-anchor="middle" font-size="11" fill="#9a9a9a" font-family="Liberation Sans" textLength="38" lengthAdjust="spacingAndGlyphs">202306</text>
<text x="1198.0" y="752.2" text-anchor="middle" font-size="11" fill="#9a9a9a" font-family="Liberation Sans" textLength="38" lengthAdjust="spacingAndGlyphs">202310</text>
<text x="1246.5" y="752.2" text-anchor="middle" font-size="11" fill="#9a9a9a" font-family="Liberation Sans" textLength="38" lengthAdjust="spacingAndGlyphs">202311</text>
<text x="1295.0" y="752.2" text-anchor="middle" font-size="11" fill="#9a9a9a" font-family="Liberation Sans" textLength="38" lengthAdjust="spacingAndGlyphs">202312</text>
<text x="1343.5" y="752.2" text-anchor="middle" font-size="11" fill="#9a9a9a" font-family="Liberation Sans" textLength="38" lengthAdjust="spacingAndGlyphs">202401</text>
<text x="1392.0" y="752.2" text-anchor="middle" font-size="11" fill="#9a9a9a" font-family="Liberation Sans" textLength="38" lengthAdjust="spacingAndGlyphs">202402</text>
<text x="1440.5" y="752.2" text-anchor="middle" font-size="11" fill="#9a9a9a" font-family="Liberation Sans" textLength="38" lengthAdjust="spacingAndGlyphs">202403</text>
<text x="1489.0" y="752.2" text-anchor="middle" font-size="11" fill="#9a9a9a" font-family="Liberation Sans" textLength="38" lengthAdjust="spacingAndGlyphs">202404</text>
<rect x="1151" y="440" width="9" height="9" fill="#7483a2"/>
<text x="1164.3" y="448.6" font-size="11" fill="#999" font-family="Liberation Sans">全资</text>
<rect x="1201" y="440" width="9" height="9" fill="#74a0f7"/>
<text x="1214.7" y="448.6" font-size="11" fill="#999" font-family="Liberation Sans">参股</text>
<rect x="1250.3" y="440" width="9" height="9" fill="#73dcb0"/>
<text x="1264.8" y="448.6" font-size="11" fill="#999" font-family="Liberation Sans">实际控制</text>
<rect x="1322.3" y="440" width="9" height="9" fill="#f5cd5c"/>
<text x="1335.8" y="448.6" font-size="11" fill="#999" font-family="Liberation Sans">控股</text>
<line x1="1618" y1="434.9" x2="1975.5" y2="434.9" stroke="#e3e7f0" stroke-width="1" stroke-dasharray="6.5 7"/>
<line x1="1618" y1="490.2" x2="1975.5" y2="490.2" stroke="#e3e7f0" stroke-width="1" stroke-dasharray="6.5 7"/>
<line x1="1618" y1="545.5" x2="1975.5" y2="545.5" stroke="#e3e7f0" stroke-width="1" stroke-dasharray="6.5 7"/>
<line x1="1618" y1="600.8" x2="1975.5" y2="600.8" stroke="#e3e7f0" stroke-width="1" stroke-dasharray="6.5 7"/>
<line x1="1618" y1="656.1" x2="1975.5" y2="656.1" stroke="#e3e7f0" stroke-width="1" stroke-dasharray="6.5 7"/>
<text x="1613" y="439.9" text-anchor="end" font-size="13" fill="#6e7079" font-family="Liberation Sans">1000</text>
<text x="1613" y="495.2" text-anchor="end" font-size="13" fill="#6e7079" font-family="Liberation Sans">800</text>
<text x="1613" y="550.5" text-anchor="end" font-size="13" fill="#6e7079" font-family="Liberation Sans">600</text>
<text x="1613" y="605.8" text-anchor="end" font-size="13" fill="#6e7079" font-family="Liberation Sans">400</text>
<text x="1613" y="661.1" text-anchor="end" font-size="13" fill="#6e7079" font-family="Liberation Sans">200</text>
<text x="1613" y="716.4" text-anchor="end" font-size="13" fill="#6e7079" font-family="Liberation Sans">0</text>
<rect x="1618" y="711" width="358" height="1.2" fill="#dfe3ea"/>
<rect x="1617.8" y="711.5" width="1" height="5" fill="#dfe3ea"/>
<rect x="1653.5" y="711.5" width="1" height="5" fill="#dfe3ea"/>
<rect x="1689.3" y="711.5" width="1" height="5" fill="#dfe3ea"/>
<rect x="1725.0" y="711.5" width="1" height="5" fill="#dfe3ea"/>
<rect x="1760.8" y="711.5" width="1" height="5" fill="#dfe3ea"/>
<rect x="1796.5" y="711.5" width="1" height="5" fill="#dfe3ea"/>
<rect x="1832.3" y="711.5" width="1" height="5" fill="#dfe3ea"/>
<rect x="1868.0" y="711.5" width="1" height="5" fill="#dfe3ea"/>
<rect x="1903.8" y="711.5" width="1" height="5" fill="#dfe3ea"/>
<rect x="1939.5" y="711.5" width="1" height="5" fill="#dfe3ea"/>
<rect x="1975.3" y="711.5" width="1" height="5" fill="#dfe3ea"/>
<text x="1635.6" y="735.2" text-anchor="middle" font-size="13.5" fill="#6e7079" font-family="Liberation Sans">202304</text>
<text x="1707.1" y="735.2" text-anchor="middle" font-size="13.5" fill="#6e7079" font-family="Liberation Sans">202306</text>
<text x="1778.6" y="735.2" text-anchor="middle" font-size="13.5" fill="#6e7079" font-family="Liberation Sans">202311</text>
<text x="1850.1" y="735.2" text-anchor="middle" font-size="13.5" fill="#6e7079" font-family="Liberation Sans">202401</text>
<text x="1921.6" y="735.2" text-anchor="middle" font-size="13.5" fill="#6e7079" font-family="Liberation Sans">202403</text>
<polyline points="1635.6,452.4 1671.3,452.7 1707.1,452.4 1742.8,452.4 1778.6,490.9 1814.3,492.3 1850.1,493.1 1885.8,491.7 1921.6,491.4 1957.3,491.7" fill="none" stroke="#f48989" stroke-width="2"/>
<circle cx="1635.6" cy="452.4" r="4.4" fill="#f48989" stroke="#fff" stroke-width="1.4"/>
<circle cx="1671.3" cy="452.7" r="4.4" fill="#f48989" stroke="#fff" stroke-width="1.4"/>
<circle cx="1707.1" cy="452.4" r="4.4" fill="#f48989" stroke="#fff" stroke-width="1.4"/>
<circle cx="1742.8" cy="452.4" r="4.4" fill="#f48989" stroke="#fff" stroke-width="1.4"/>
<circle cx="1778.6" cy="490.9" r="4.4" fill="#f48989" stroke="#fff" stroke-width="1.4"/>
<circle cx="1814.3" cy="492.3" r="4.4" fill="#f48989" stroke="#fff" stroke-width="1.4"/>
<circle cx="1850.1" cy="493.1" r="4.4" fill="#f48989" stroke="#fff" stroke-width="1.4"/>
<circle cx="1885.8" cy="491.7" r="4.4" fill="#f48989" stroke="#fff" stroke-width="1.4"/>
<circle cx="1921.6" cy="491.4" r="4.4" fill="#f48989" stroke="#fff" stroke-width="1.4"/>
<circle cx="1957.3" cy="491.7" r="4.4" fill="#f48989" stroke="#fff" stroke-width="1.4"/>
<polyline points="1635.6,494.4 1671.3,494.7 1707.1,494.4 1742.8,494.4 1778.6,534.6 1814.3,535.1 1850.1,535.1 1885.8,534.8 1921.6,534.6 1957.3,535.1" fill="none" stroke="#f5cf5f" stroke-width="2"/>
<circle cx="1635.6" cy="494.4" r="4.4" fill="#f5cf5f" stroke="#fff" stroke-width="1.4"/>
<circle cx="1671.3" cy="494.7" r="4.4" fill="#f5cf5f" stroke="#fff" stroke-width="1.4"/>
<circle cx="1707.1" cy="494.4" r="4.4" fill="#f5cf5f" stroke="#fff" stroke-width="1.4"/>
<circle cx="1742.8" cy="494.4" r="4.4" fill="#f5cf5f" stroke="#fff" stroke-width="1.4"/>
<circle cx="1778.6" cy="534.6" r="4.4" fill="#f5cf5f" stroke="#fff" stroke-width="1.4"/>
<circle cx="1814.3" cy="535.1" r="4.4" fill="#f5cf5f" stroke="#fff" stroke-width="1.4"/>
<circle cx="1850.1" cy="535.1" r="4.4" fill="#f5cf5f" stroke="#fff" stroke-width="1.4"/>
<circle cx="1885.8" cy="534.8" r="4.4" fill="#f5cf5f" stroke="#fff" stroke-width="1.4"/>
<circle cx="1921.6" cy="534.6" r="4.4" fill="#f5cf5f" stroke="#fff" stroke-width="1.4"/>
<circle cx="1957.3" cy="535.1" r="4.4" fill="#f5cf5f" stroke="#fff" stroke-width="1.4"/>
<polyline points="1635.6,502.6 1671.3,502.8 1707.1,502.6 1742.8,502.6 1778.6,542.5 1814.3,543.1 1850.1,542 1885.8,543 1921.6,542.5 1957.3,543" fill="none" stroke="#90cdf2" stroke-width="2"/>
<circle cx="1635.6" cy="502.6" r="4.4" fill="#90cdf2" stroke="#fff" stroke-width="1.4"/>
<circle cx="1671.3" cy="502.8" r="4.4" fill="#90cdf2" stroke="#fff" stroke-width="1.4"/>
<circle cx="1707.1" cy="502.6" r="4.4" fill="#90cdf2" stroke="#fff" stroke-width="1.4"/>
<circle cx="1742.8" cy="502.6" r="4.4" fill="#90cdf2" stroke="#fff" stroke-width="1.4"/>
<circle cx="1778.6" cy="542.5" r="4.4" fill="#90cdf2" stroke="#fff" stroke-width="1.4"/>
<circle cx="1814.3" cy="543.1" r="4.4" fill="#90cdf2" stroke="#fff" stroke-width="1.4"/>
<circle cx="1850.1" cy="542" r="4.4" fill="#90cdf2" stroke="#fff" stroke-width="1.4"/>
<circle cx="1885.8" cy="543" r="4.4" fill="#90cdf2" stroke="#fff" stroke-width="1.4"/>
<circle cx="1921.6" cy="542.5" r="4.4" fill="#90cdf2" stroke="#fff" stroke-width="1.4"/>
<circle cx="1957.3" cy="543" r="4.4" fill="#90cdf2" stroke="#fff" stroke-width="1.4"/>
<polyline points="1635.6,595.9 1671.3,596.2 1707.1,595.9 1742.8,595.9 1778.6,592 1814.3,592.7 1850.1,592.4 1885.8,592.4 1921.6,591.8 1957.3,592.4" fill="none" stroke="#38a0f4" stroke-width="2"/>
<circle cx="1635.6" cy="595.9" r="4.4" fill="#38a0f4" stroke="#fff" stroke-width="1.4"/>
<circle cx="1671.3" cy="596.2" r="4.4" fill="#38a0f4" stroke="#fff" stroke-width="1.4"/>
<circle cx="1707.1" cy="595.9" r="4.4" fill="#38a0f4" stroke="#fff" stroke-width="1.4"/>
<circle cx="1742.8" cy="595.9" r="4.4" fill="#38a0f4" stroke="#fff" stroke-width="1.4"/>
<circle cx="1778.6" cy="592" r="4.4" fill="#38a0f4" stroke="#fff" stroke-width="1.4"/>
<circle cx="1814.3" cy="592.7" r="4.4" fill="#38a0f4" stroke="#fff" stroke-width="1.4"/>
<circle cx="1850.1" cy="592.4" r="4.4" fill="#38a0f4" stroke="#fff" stroke-width="1.4"/>
<circle cx="1885.8" cy="592.4" r="4.4" fill="#38a0f4" stroke="#fff" stroke-width="1.4"/>
<circle cx="1921.6" cy="591.8" r="4.4" fill="#38a0f4" stroke="#fff" stroke-width="1.4"/>
<circle cx="1957.3" cy="592.4" r="4.4" fill="#38a0f4" stroke="#fff" stroke-width="1.4"/>
<line x1="1985.5" y1="568.7" x2="2000.5" y2="568.7" stroke="#38a0f4" stroke-width="2" stroke-dasharray="2 1.5"/>
<circle cx="1993" cy="568.7" r="4.2" fill="#38a0f4" stroke="#fff" stroke-width="1"/>
<text x="2006" y="573.9" font-size="14.5" fill="#6e7079" font-family="Liberation Sans">全资</text>
<line x1="1985.5" y1="593.2" x2="2000.5" y2="593.2" stroke="#90cdf2" stroke-width="2" stroke-dasharray="2 1.5"/>
<circle cx="1993" cy="593.2" r="4.2" fill="#90cdf2" stroke="#fff" stroke-width="1"/>
<text x="2006" y="598.4" font-size="14.5" fill="#6e7079" font-family="Liberation Sans">参股</text>
<line x1="1985.5" y1="617.6" x2="2000.5" y2="617.6" stroke="#f5cf5f" stroke-width="2" stroke-dasharray="2 1.5"/>
<circle cx="1993" cy="617.6" r="4.2" fill="#f5cf5f" stroke="#fff" stroke-width="1"/>
<text x="2006" y="622.8" font-size="14.5" fill="#6e7079" font-family="Liberation Sans">实际控制</text>
<line x1="1985.5" y1="641.9" x2="2000.5" y2="641.9" stroke="#f48989" stroke-width="2" stroke-dasharray="2 1.5"/>
<circle cx="1993" cy="641.9" r="4.2" fill="#f48989" stroke="#fff" stroke-width="1"/>
<text x="2006" y="647.1" font-size="14.5" fill="#6e7079" font-family="Liberation Sans">控股</text>
<circle cx="2050.5" cy="443.6" r="2.3" fill="#666"/>
<circle cx="2056.8" cy="443.6" r="2.3" fill="#666"/>
<circle cx="2063" cy="443.6" r="2.3" fill="#666"/>
</svg>
<div class="t " style="left:1018.3px;top:863.0px;font-size:14px;line-height:14px;color:#000;font-weight:bold">版本号:</div>
<div class="b" style="left:1102px;top:853px;width:147px;height:33px;border:1.5px solid #b9bdcc;background:#fff"></div>
<div class="b" style="left:1227px;top:854px;width:21px;height:31px;background:#4ea7e8"></div>
<svg style="left:1232px;top:867px" width="11" height="6" viewBox="0 0 11 6"><path d="M0.5 0.5 H10.5 L5.5 5.5 Z" fill="#fff"/></svg>
<div class="t" style="left:1140px;top:861px;font-size:14.5px;line-height:16px;color:#222">202312</div>
<div class="t " style="left:1018.3px;top:910.0px;font-size:14px;line-height:14px;color:#000;font-weight:bold">企业名称:</div>
<div class="b" style="left:1102px;top:900px;width:147px;height:33px;border:1.5px solid #b9bdcc;background:#fff"></div>
<div class="b" style="left:1227px;top:901px;width:21px;height:31px;background:#4ea7e8"></div>
<svg style="left:1232px;top:914px" width="11" height="6" viewBox="0 0 11 6"><path d="M0.5 0.5 H10.5 L5.5 5.5 Z" fill="#fff"/></svg>
<div class="t " style="left:1018.3px;top:957.0px;font-size:14px;line-height:14px;color:#000;font-weight:bold">管理权归属:</div>
<div class="b" style="left:1102px;top:947px;width:147px;height:33px;border:1.5px solid #b9bdcc;background:#fff"></div>
<div class="b" style="left:1227px;top:948px;width:21px;height:31px;background:#4ea7e8"></div>
<svg style="left:1232px;top:961px" width="11" height="6" viewBox="0 0 11 6"><path d="M0.5 0.5 H10.5 L5.5 5.5 Z" fill="#fff"/></svg>
<div class="t " style="left:1273.3px;top:863.0px;font-size:14px;line-height:14px;color:#000;font-weight:bold">年月:</div>
<div class="b" style="left:1357px;top:853px;width:147px;height:33px;border:1.5px solid #b9bdcc;background:#fff"></div>
<div class="b" style="left:1482px;top:854px;width:21px;height:31px;background:#4ea7e8"></div>
<svg style="left:1484px;top:862px" width="17" height="16" viewBox="0 0 17 16"><g fill="none" stroke="#fff" stroke-width="1.1">
<rect x="1.5" y="2.5" width="14" height="12.5" rx="1.5"/><path d="M4.5 0.8 V4 M12.5 0.8 V4"/></g>
<g fill="#fff"><rect x="3.5" y="6" width="2.5" height="2.5"/><rect x="7.2" y="6" width="2.5" height="2.5"/><rect x="10.9" y="6" width="2.5" height="2.5"/><rect x="3.5" y="10" width="2.5" height="2.5"/><rect x="7.2" y="10" width="2.5" height="2.5"/><rect x="10.9" y="10" width="2.5" height="2.5"/></g></svg>
<div class="t " style="left:1273.3px;top:910.0px;font-size:14px;line-height:14px;color:#000;font-weight:bold">级次:</div>
<div class="b" style="left:1357px;top:900px;width:147px;height:33px;border:1.5px solid #b9bdcc;background:#fff"></div>
<div class="b" style="left:1482px;top:901px;width:21px;height:31px;background:#4ea7e8"></div>
<svg style="left:1487px;top:914px" width="11" height="6" viewBox="0 0 11 6"><path d="M0.5 0.5 H10.5 L5.5 5.5 Z" fill="#fff"/></svg>
<div class="t " style="left:1273.3px;top:957.0px;font-size:14px;line-height:14px;color:#000;font-weight:bold">矿井属性:</div>
<div class="b" style="left:1357px;top:947px;width:147px;height:33px;border:1.5px solid #b9bdcc;background:#fff"></div>
<div class="b" style="left:1482px;top:948px;width:21px;height:31px;background:#4ea7e8"></div>
<svg style="left:1487px;top:961px" width="11" height="6" viewBox="0 0 11 6"><path d="M0.5 0.5 H10.5 L5.5 5.5 Z" fill="#fff"/></svg>
<div class="t " style="left:1529.0px;top:863.0px;font-size:14px;line-height:14px;color:#000;font-weight:bold">企业性质:</div>
<div class="b" style="left:1613px;top:853px;width:147px;height:33px;border:1.5px solid #b9bdcc;background:#fff"></div>
<div class="b" style="left:1738px;top:854px;width:21px;height:31px;background:#4ea7e8"></div>
<svg style="left:1743px;top:867px" width="11" height="6" viewBox="0 0 11 6"><path d="M0.5 0.5 H10.5 L5.5 5.5 Z" fill="#fff"/></svg>
<div class="t " style="left:1529.0px;top:910.0px;font-size:14px;line-height:14px;color:#000;font-weight:bold">所属板块:</div>
<div class="b" style="left:1613px;top:900px;width:147px;height:33px;border:1.5px solid #b9bdcc;background:#fff"></div>
<div class="b" style="left:1738px;top:901px;width:21px;height:31px;background:#4ea7e8"></div>
<svg style="left:1743px;top:914px" width="11" height="6" viewBox="0 0 11 6"><path d="M0.5 0.5 H10.5 L5.5 5.5 Z" fill="#fff"/></svg>
<div class="b" style="left:1697px;top:947px;width:64px;height:34px;background:#4ea7e8;border-radius:4px"></div>
<svg style="left:1704px;top:955px" width="18" height="18" viewBox="0 0 18 18"><circle cx="9" cy="9" r="8" fill="#1ebe5a"/><path d="M5 9.2 L8 12 L13 6.5" fill="none" stroke="#fff" stroke-width="2.2"/></svg>
<div class="t " style="left:1723.6px;top:956.9px;font-size:14px;line-height:14px;color:#fff">查询</div>
</body></html>
